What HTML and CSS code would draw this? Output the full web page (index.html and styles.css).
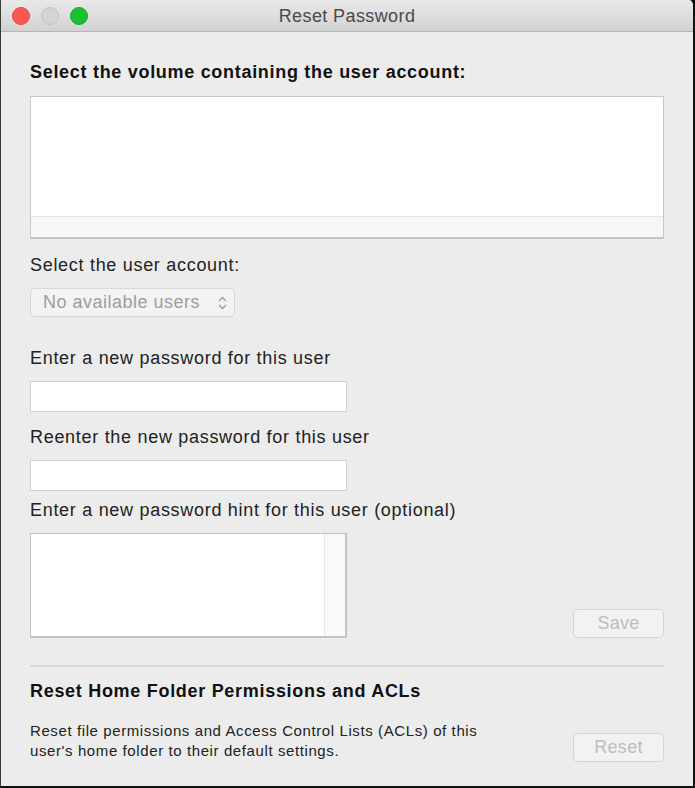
FILE: index.html
```html
<!DOCTYPE html>
<html lang="en">
<head>
    <meta charset="UTF-8">
    <title>Reset Password</title>
    <link rel="stylesheet" href="styles.css">
</head>
<body>
    <div class="window">
        <div class="titlebar">
            <div class="lights">
                <span class="light red"></span>
                <span class="light gray"></span>
                <span class="light green"></span>
            </div>
            <div class="title">Reset Password</div>
        </div>

        <div class="content">
            <h2 class="section-title">Select the volume containing the user account:</h2>
            <div class="volume-list">
                <div class="list-body"></div>
                <div class="list-foot"></div>
            </div>

            <label class="field-label first">Select the user account:</label>
            <div class="popup">
                <span>No available users</span>
                <svg width="9" height="14" viewBox="0 0 9 14">
                    <path d="M1 5 L4.5 1.5 L8 5" fill="none" stroke="#9a9a9a" stroke-width="1.3"/>
                    <path d="M1 9 L4.5 12.5 L8 9" fill="none" stroke="#9a9a9a" stroke-width="1.3"/>
                </svg>
            </div>

            <label class="field-label pw-label">Enter a new password for this user</label>
            <div class="text-input"></div>

            <label class="field-label">Reenter the new password for this user</label>
            <div class="text-input"></div>

            <label class="field-label hint-label">Enter a new password hint for this user (optional)</label>
            <div class="hint-row">
                <div class="hint-box">
                    <div class="hint-text"></div>
                    <div class="hint-scroll"></div>
                </div>
                <button class="mac-btn">Save</button>
            </div>

            <hr class="separator">

            <h2 class="section-title acl-title">Reset Home Folder Permissions and ACLs</h2>
            <div class="acl-row">
                <p class="acl-desc">Reset file permissions and Access Control Lists (ACLs) of this user's home folder to their default settings.</p>
                <button class="mac-btn">Reset</button>
            </div>
        </div>
    </div>
</body>
</html>
```

FILE: styles.css
```css
* {
    box-sizing: border-box;
}

html, body {
    margin: 0;
    padding: 0;
    background-color: #000;
}

body {
    font-family: "Liberation Sans", Arial, sans-serif;
    color: #222;
    width: 695px;
    height: 788px;
    overflow: hidden;
}

.window {
    width: 695px;
    height: 788px;
    background-color: #ececec;
    border-left: 1px solid #3a3a3a;
    border-right: 2px solid #111;
    border-bottom: 2px solid #111;
    border-top-right-radius: 6px;
    overflow: hidden;
}

.titlebar {
    height: 32px;
    background: linear-gradient(#e9e9e9, #d2d2d2);
    border-bottom: 1px solid #b4b4b4;
    display: flex;
    align-items: center;
    position: relative;
}

.lights {
    display: flex;
    gap: 11px;
    padding-left: 11px;
}

.light {
    width: 18px;
    height: 18px;
    border-radius: 50%;
    display: block;
}

.light.red {
    background-color: #fc5753;
    border: 1px solid #e0443e;
}

.light.gray {
    background-color: #d4d4d4;
    border: 1px solid #c2c2c2;
}

.light.green {
    background-color: #1bc130;
    border: 1px solid #15a828;
}

.title {
    position: absolute;
    left: 0;
    right: 0;
    text-align: center;
    font-size: 18px;
    letter-spacing: 0.4px;
    color: #4a4a4a;
    top: 6px;
}

.content {
    padding: 0 29px 0 29px;
}

.section-title {
    font-size: 18px;
    letter-spacing: 0.7px;
    font-weight: bold;
    margin: 31px 0 0 0;
    line-height: 19px;
    color: #111;
}

.volume-list {
    margin-top: 14px;
    height: 143px;
    background-color: #fff;
    border: 1px solid #c8c8c8;
    border-bottom: 2px solid #c4c4c4;
    display: flex;
    flex-direction: column;
}

.list-body {
    flex: 1;
}

.list-foot {
    height: 21px;
    background-color: #f7f7f7;
    border-top: 1px solid #e4e4e4;
}

.field-label {
    display: block;
    font-size: 18px;
    letter-spacing: 0.7px;
    line-height: 19px;
    margin-top: 16px;
    color: #222;
}

.field-label.first {
    margin-top: 17px;
}

.popup {
    margin-top: 13px;
    width: 205px;
    height: 29px;
    border: 1px solid #d6d6d6;
    border-radius: 5px;
    background-color: #f3f3f3;
    display: flex;
    align-items: center;
    justify-content: space-between;
    padding: 0 7px 0 12px;
    font-size: 18px;
    letter-spacing: 0.5px;
    color: #9e9e9e;
}

.field-label.pw-label {
    margin-top: 32px;
}

.text-input {
    margin-top: 13px;
    width: 317px;
    height: 31px;
    background-color: #fff;
    border: 1px solid #cfcfcf;
}

.field-label.hint-label {
    margin-top: 10px;
}

.hint-row {
    margin-top: 13px;
    display: flex;
    justify-content: space-between;
    align-items: flex-end;
}

.hint-box {
    width: 317px;
    height: 105px;
    border: 1px solid #c4c4c4;
    border-width: 1px 2px 2px 1px;
    background-color: #fff;
    display: flex;
}

.hint-text {
    flex: 1;
}

.hint-scroll {
    width: 21px;
    background-color: #f9f9f9;
    border-left: 1px solid #e8e8e8;
}

.mac-btn {
    width: 91px;
    height: 29px;
    border: 1px solid #d4d4d4;
    border-radius: 5px;
    background-color: #f2f2f2;
    color: #bdbdbd;
    font-family: "Liberation Sans", Arial, sans-serif;
    font-size: 18px;
    letter-spacing: 0.3px;
    padding: 0;
}

.separator {
    margin: 27px 0 0 0;
    border: none;
    border-top: 2px solid #d9d9d9;
}

.section-title.acl-title {
    margin-top: 15px;
}

.acl-row {
    margin-top: 20px;
    display: flex;
    justify-content: space-between;
    align-items: flex-start;
}

.acl-desc {
    margin: 0;
    width: 480px;
    font-size: 15px;
    letter-spacing: 0.6px;
    line-height: 20px;
    color: #222;
}

.acl-row .mac-btn {
    margin-top: 12px;
}
```
